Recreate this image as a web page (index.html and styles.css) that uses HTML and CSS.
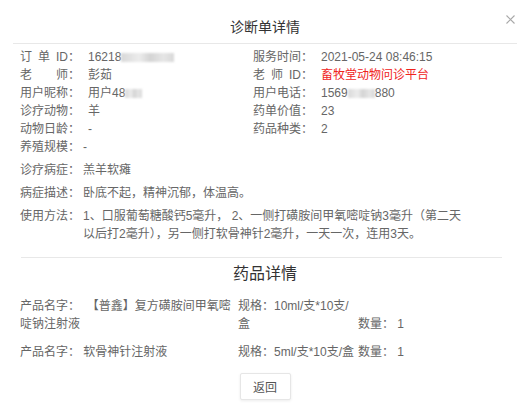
FILE: index.html
```html
<!DOCTYPE html>
<html lang="zh-CN">
<head>
<meta charset="utf-8">
<title>诊断单详情</title>
<link rel="stylesheet" href="styles.css">
</head>
<body>
<div class="dialog">
  <div class="header">
    <span class="title">诊断单详情</span>
    <span class="close" aria-label="关闭">
      <svg width="9" height="9" viewBox="0 0 9 9"><path d="M0.5 0.5 L8.5 8.5 M8.5 0.5 L0.5 8.5" stroke="#a8a8a8" stroke-width="1.1" fill="none"/></svg>
    </span>
  </div>

  <div class="info">
    <div class="grid">
      <div class="cell"><span class="lbl"><span class="jt">订单ID</span>：</span><span class="val">16218<span class="blur w8"></span></span></div>
      <div class="cell"><span class="lbl"><span class="jt">服务时间</span>：</span><span class="val">2021-05-24 08:46:15</span></div>
      <div class="cell"><span class="lbl"><span class="jt">老师</span>：</span><span class="val">彭茹</span></div>
      <div class="cell"><span class="lbl"><span class="jt">老师ID</span>：</span><span class="val red">畜牧堂动物问诊平台</span></div>
      <div class="cell"><span class="lbl"><span class="jt">用户昵称</span>：</span><span class="val">用户48<span class="blur w3"></span></span></div>
      <div class="cell"><span class="lbl"><span class="jt">用户电话</span>：</span><span class="val">1569<span class="blur w4"></span>880</span></div>
      <div class="cell"><span class="lbl"><span class="jt">诊疗动物</span>：</span><span class="val">羊</span></div>
      <div class="cell"><span class="lbl"><span class="jt">药单价值</span>：</span><span class="val">23</span></div>
      <div class="cell"><span class="lbl"><span class="jt">动物日龄</span>：</span><span class="val">-</span></div>
      <div class="cell"><span class="lbl"><span class="jt">药品种类</span>：</span><span class="val">2</span></div>
    </div>
    <div class="row"><span class="lbl2">养殖规模：</span><span class="val2">-</span></div>
    <div class="row gap"><span class="lbl2">诊疗病症：</span><span class="val2">羔羊软瘫</span></div>
    <div class="row gap"><span class="lbl2">病症描述：</span><span class="val2">卧底不起，精神沉郁，体温高。</span></div>
    <div class="row gap"><span class="lbl2">使用方法：</span><span class="val2 wide">1、口服葡萄糖酸钙5毫升， 2、一侧打磺胺间甲氧嘧啶钠3毫升（第二天以后打2毫升），另一侧打软骨神针2毫升，一天一次，连用3天。</span></div>
  </div>

  <div class="divider"></div>

  <h2 class="subtitle">药品详情</h2>

  <div class="products">
    <div class="prod">
      <div class="pname">产品名字：&nbsp; 【普鑫】复方磺胺间甲氧嘧啶钠注射液</div>
      <div class="pspec">规格：10ml/支*10支/盒</div>
      <div class="pqty">数量：&nbsp;1</div>
    </div>
    <div class="prod">
      <div class="pname">产品名字： 软骨神针注射液</div>
      <div class="pspec">规格：5ml/支*10支/盒</div>
      <div class="pqty">数量：&nbsp;1</div>
    </div>
  </div>

  <div class="footer">
    <button class="btn" type="button">返回</button>
  </div>
</div>
</body>
</html>
```

FILE: styles.css
```css
html, body {
  margin: 0;
  padding: 0;
  background: #fff;
}
body {
  font-family: "Liberation Sans", "Noto Sans CJK SC", Arial, sans-serif;
  font-size: 12px;
  color: #666;
  width: 530px;
  height: 412px;
  overflow: hidden;
}
.dialog {
  width: 530px;
}
.header {
  position: relative;
  margin: 0 13px;
  padding-top: 8px;
  height: 35px;
  border-bottom: 1px solid #e8e8e8;
  display: flex;
  align-items: center;
  justify-content: center;
}
.title {
  font-size: 14px;
  color: #333;
}
.close {
  position: absolute;
  right: 2px;
  top: 15px;
  width: 9px;
  height: 9px;
  display: flex;
}
.info {
  padding: 4px 0 0 20px;
  line-height: 18px;
}
.grid {
  display: grid;
  grid-template-columns: 233px 1fr;
}
.cell {
  display: flex;
  white-space: nowrap;
}
.lbl {
  width: 68px;
  flex: none;
  display: flex;
}
.jt {
  display: inline-block;
  width: 48px;
  text-align: justify;
  text-align-last: justify;
}
.val {
  display: inline-flex;
  align-items: center;
}
.red {
  color: #f0231c;
}
.blur {
  display: inline-block;
  height: 9px;
  background: linear-gradient(90deg, #d9d9d9 0%, #ececec 35%, #d4d4d4 55%, #e6e6e6 80%, #d8d8d8 100%);
  filter: blur(1.2px);
}
.w8 { width: 53px; }
.w3 { width: 17px; }
.w4 { width: 27px; }
.row {
  display: flex;
}
.row.gap {
  margin-top: 5px;
}
.lbl2 {
  width: 63px;
  flex: none;
  white-space: nowrap;
}
.val2.wide {
  width: 386px;
}
.divider {
  margin: 14px 28px 0 21px;
  border-top: 1px solid #e8e8e8;
}
.subtitle {
  margin: 5px 0 0;
  font-size: 16px;
  font-weight: normal;
  line-height: 22px;
  color: #333;
  text-align: center;
}
.products {
  padding: 12px 0 0 20px;
  line-height: 18px;
}
.prod {
  display: flex;
  align-items: last baseline;
}
.prod + .prod {
  margin-top: 10px;
}
.pname {
  width: 218px;
  flex: none;
}
.pspec {
  width: 120px;
  flex: none;
}
.pqty {
  white-space: nowrap;
}
.footer {
  display: flex;
  justify-content: center;
  margin-top: 12px;
}
.btn {
  width: 51px;
  height: 27px;
  border: 1px solid #e6e6e6;
  border-radius: 2px;
  background: #fff;
  box-shadow: 0 1px 3px rgba(0, 0, 0, 0.08);
  font-family: "Liberation Sans", "Noto Sans CJK SC", sans-serif;
  font-size: 12px;
  color: #555;
  padding: 0;
}
```
